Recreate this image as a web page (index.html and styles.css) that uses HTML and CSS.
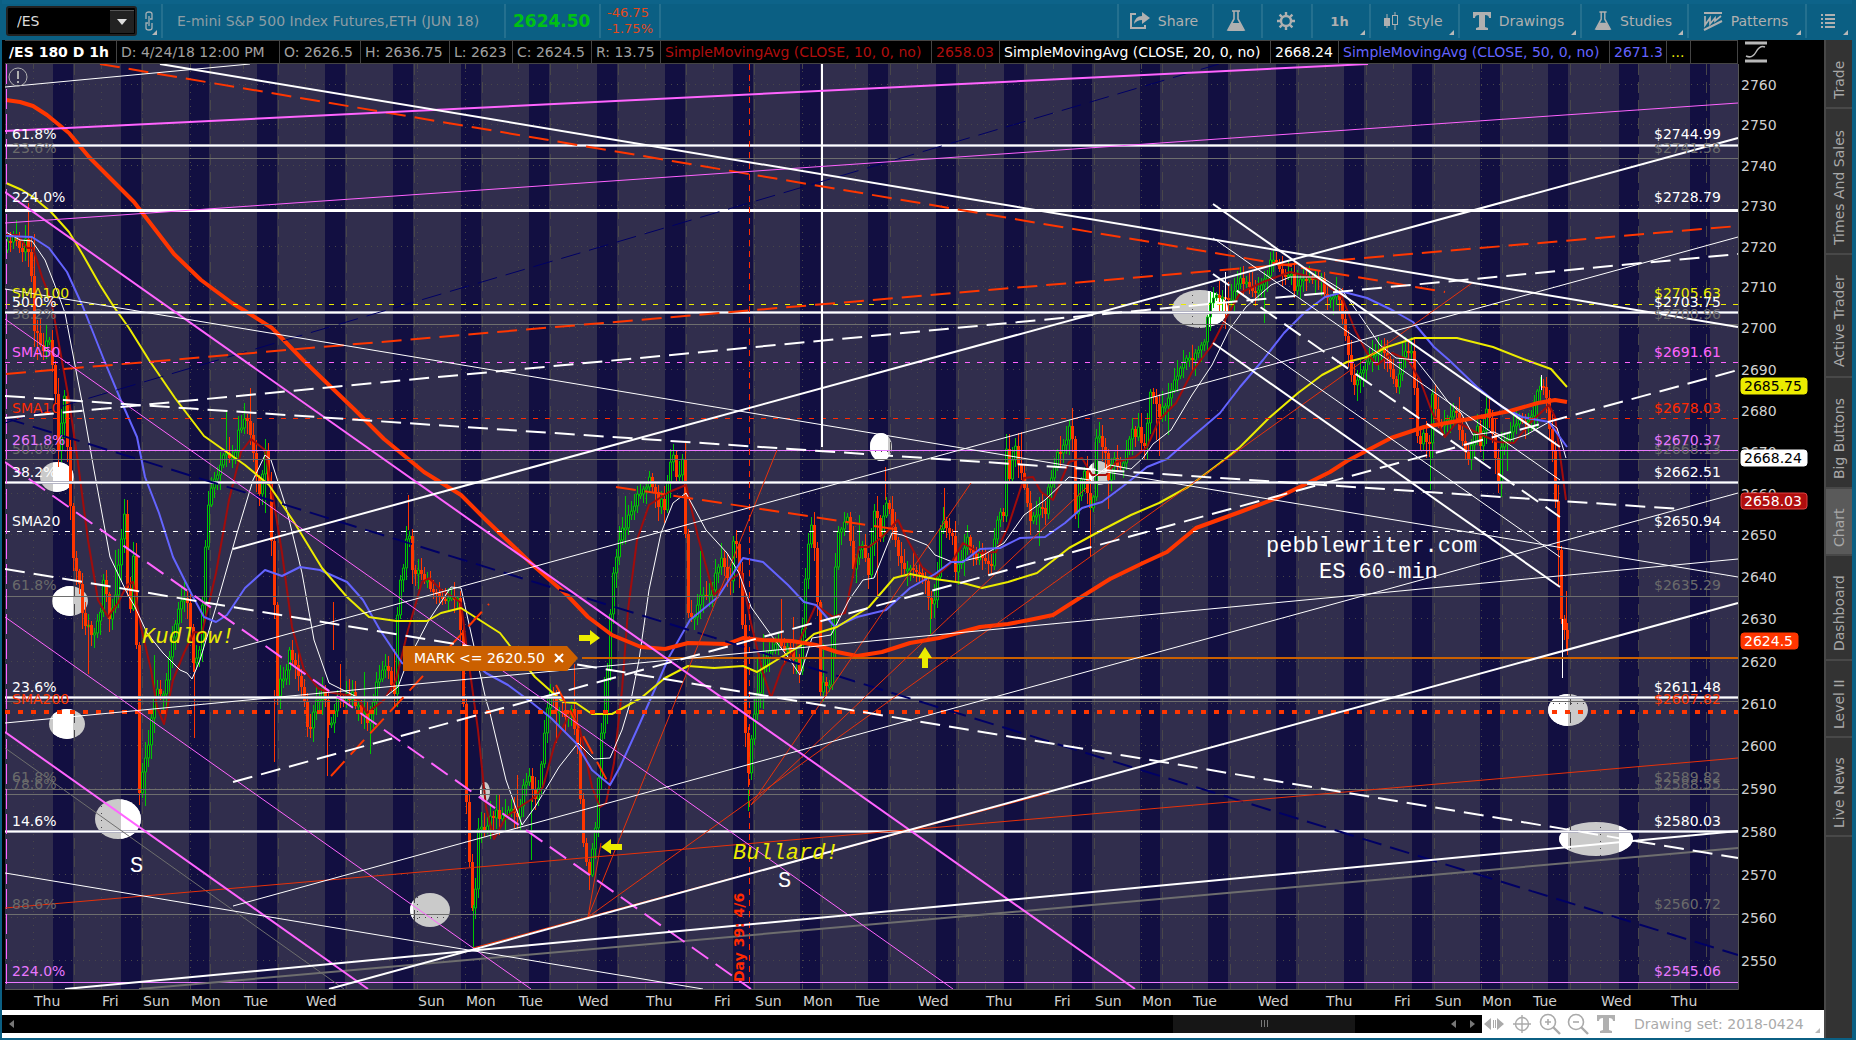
FILE: index.html
```html
<!DOCTYPE html>
<html lang="en">
<head>
  <meta charset="UTF-8">
  <meta name="viewport" content="width=device-width, initial-scale=1.0">
  <title>/ES Chart</title>
  <link rel="stylesheet" href="styles.css">
</head>
<body>
  <header class="toolbar">
    <div class="symbol-box">
      <input class="symbol" type="text" value="/ES" aria-label="Symbol">
      <button class="symbol-drop" aria-label="Choose symbol"><svg width="10" height="6"><path d="M0 0h10L5 6z" fill="#ddd"/></svg></button>
    </div>
    <button class="link corner" aria-label="Link">
      <svg width="12" height="20" fill="none" stroke="#a8b0b4" stroke-width="1.3"><path d="M3 8V3q0-2 3-2t3 2v5H7M9 12v5q0 2-3 2t-3-2v-5h2M6 5v10"/></svg>
    </button>
    <div class="name">E-mini S&amp;P 500 Index Futures,ETH (JUN 18)</div>
    <div class="last">2624.50</div>
    <div class="change"><span>-46.75</span><span>-1.75%</span></div>
    <div class="spacer"></div>
    <button class="tool share">
      <svg width="20" height="18"><path d="M6 2H1v14h14v-3" fill="none" stroke="#b0b0b0" stroke-width="2"/><path d="M12 0l8 6-8 6V8q-5 0-8 4 1-8 8-8z" fill="#b0b0b0"/></svg>
      Share
    </button>
    <button class="tool flask" aria-label="Analyze"><svg width="20" height="22"><use href="#flask-icon"/></svg></button>
    <button class="tool gear" aria-label="Settings">
      <svg width="20" height="20" fill="none" stroke="#b0b0b0"><circle cx="10" cy="10" r="5" stroke-width="2.4"/><path d="M10 1v4M10 15v4M1 10h4M15 10h4M3.6 3.6l3 3M13.4 13.4l3 3M16.4 3.6l-3 3M6.6 13.4l-3 3" stroke-width="2.4"/></svg>
    </button>
    <button class="tool period corner"><b>1h</b></button>
    <button class="tool style corner">
      <svg width="16" height="18" stroke="#b0b0b0"><path d="M4 2v14M12 0v18"/><rect x="1.500" y="6.500" width="5" height="7" fill="#b0b0b0"/><rect x="9.500" y="3.500" width="5" height="9" fill="#0b5f83"/></svg>
      Style
    </button>
    <button class="tool drawings corner"><svg width="18" height="18"><use href="#t-icon"/></svg>Drawings</button>
    <button class="tool studies corner"><svg width="18" height="22"><use href="#flask-icon"/></svg>Studies</button>
    <button class="tool patterns corner">
      <svg width="20" height="20" fill="none" stroke="#b0b0b0" stroke-width="2"><path d="M1 2h18M1 19l18-9"/><path d="M2 5v9l5-7v6l5-6v3l6-5" stroke-width="1.700"/></svg>
      Patterns
    </button>
    <button class="tool list corner" aria-label="Menu">
      <svg width="14" height="14" stroke="#b0b0b0" stroke-width="2"><path d="M0 1h2M4 1h10M0 5h2M4 5h10M0 9h2M4 9h10M0 13h2M4 13h10"/></svg>
    </button>
  </header>

  <main class="main">
    <section class="workspace">
      <div class="legend">
        <div class="cells">
          <span class="cell title">/ES 180 D 1h</span>
          <span class="cell date">D: 4/24/18 12:00 PM</span>
          <span class="cell open">O: 2626.5</span>
          <span class="cell high">H: 2636.75</span>
          <span class="cell low">L: 2623</span>
          <span class="cell close">C: 2624.5</span>
          <span class="cell range">R: 13.75</span>
          <span class="cell study sma10">SimpleMovingAvg (CLOSE, 10, 0, no)</span>
          <span class="cell value sma10">2658.03</span>
          <span class="cell study sma20">SimpleMovingAvg (CLOSE, 20, 0, no)</span>
          <span class="cell value sma20">2668.24</span>
          <span class="cell study sma50">SimpleMovingAvg (CLOSE, 50, 0, no)</span>
          <span class="cell sma50">2671.3</span>
          <span class="cell more">...</span>
        </div>
        <button class="scale" aria-label="Axis scale">
          <svg width="22" height="22" fill="none" stroke="#b8b8b8"><path d="M0 2h22M0 20h22" stroke-width="3"/><path d="M1 15q6 3 10-4t9-5" stroke-width="1.500"/></svg>
        </button>
      </div>
      <svg id="chart" class="chart" viewBox="5 64 1819 946"></svg>
      <footer class="bottom">
        <div class="scroll">
          <button class="arrow first" aria-label="Scroll to start"><svg width="5" height="8"><path d="M5 0v8L0 4z" fill="#777"/></svg></button>
          <div class="track"><div class="thumb"><i></i><i></i><i></i></div></div>
          <button class="arrow" aria-label="Scroll left"><svg width="5" height="8"><path d="M5 0v8L0 4z" fill="#777"/></svg></button>
          <button class="arrow" aria-label="Scroll right"><svg width="5" height="8"><path d="M0 0v8l5-4z" fill="#777"/></svg></button>
        </div>
        <button class="mini" aria-label="Pan"><svg width="20" height="12" fill="#aaa"><path d="M7 0v12L0 6zM13 0v12l7-6zM9 2h1v8H9zM11 2h1v8h-1z"/></svg></button>
        <button class="mini" aria-label="Crosshair"><svg width="18" height="18" fill="none" stroke="#aaa" stroke-width="1.400"><circle cx="9" cy="9" r="6.500"/><path d="M9 0v18M0 9h18"/></svg></button>
        <button class="mini" aria-label="Zoom in"><svg width="22" height="22" fill="none" stroke="#aaa" stroke-width="1.600"><circle cx="9" cy="9" r="7.500"/><path d="M9 6v6M6 9h6"/><path d="M14 14l7 7" stroke-width="2.400"/></svg></button>
        <button class="mini" aria-label="Zoom out"><svg width="22" height="22" fill="none" stroke="#aaa" stroke-width="1.600"><circle cx="9" cy="9" r="7.500"/><path d="M6 9h6"/><path d="M14 14l7 7" stroke-width="2.400"/></svg></button>
        <button class="mini" aria-label="Text"><svg width="18" height="18"><use href="#t-icon"/></svg></button>
        <button class="set corner">Drawing set: 2018-0424</button>
      </footer>
    </section>
    <nav class="tabs">
      <button class="tab trade">Trade</button>
      <button class="tab sales">Times And Sales</button>
      <button class="tab trader">Active Trader</button>
      <button class="tab big">Big Buttons</button>
      <button class="tab current">Chart</button>
      <button class="tab dash">Dashboard</button>
      <button class="tab level">Level II</button>
      <button class="tab news">Live News</button>
    </nav>
  </main>

  <svg class="defs" width="0" height="0">
    <symbol id="flask-icon" viewBox="0 0 20 22"><path d="M6 1h8M8 1v8L2 20h16L12 9V1" fill="none" stroke="#b0b0b0" stroke-width="1.600"/><path d="M6 13h8l4 8H2z" fill="#b0b0b0"/></symbol>
    <symbol id="t-icon" viewBox="0 0 18 18"><path d="M0 0h18v6h-2q0-3-4-3v12l3 1v2H3v-2l3-1V3Q2 3 2 6H0z" fill="#b0b0b0"/></symbol>
  </svg>
  <script src="chart.js"></script>
</body>
</html>
```

FILE: styles.css
```css
* {
  box-sizing: border-box;
}
body {
  margin: 0;
  height: 100vh;
  padding: 0 4px 2px 2px;
  display: flex;
  flex-direction: column;
  overflow: hidden;
  background: #0b5f83;
  font-family: "DejaVu Sans", sans-serif;
  font-size: 14px;
  color: #b0b0b0;
}
button,
input {
  font: inherit;
  color: inherit;
  border: 0;
  padding: 0;
  margin: 0;
  background: none;
}
.defs {
  position: absolute;
}

/* Toolbar */
.toolbar {
  flex: none;
  height: 40px;
  padding: 4px 0 2px 4px;
  display: flex;
  box-shadow: inset 0 4px #0d6389;
}
.symbol-box {
  width: 131px;
  height: 30px;
  margin-top: 2px;
  display: flex;
  align-items: center;
  background: #000;
  border: 2px solid #222;
  border-radius: 3px;
}
.symbol {
  flex: 1;
  width: 0;
  padding-left: 9px;
  color: #ddd;
}
.symbol-drop {
  width: 24px;
  height: 23px;
  margin-right: 1px;
  display: flex;
  align-items: center;
  justify-content: center;
  background: #222;
  border-top: 1px solid #555;
}
.link {
  position: relative;
  width: 24px;
  display: flex;
  align-items: center;
  justify-content: center;
}
.name,
.last,
.change {
  display: flex;
  align-items: center;
  border-left: 2px solid #24708f;
  white-space: nowrap;
}
.name {
  width: 343px;
  padding-left: 14px;
  color: #8d9da5;
}
.last {
  width: 95px;
  padding-left: 7px;
  font-size: 17px;
  font-weight: bold;
  color: #00c114;
}
.change {
  width: 62px;
  flex-direction: column;
  align-items: flex-start;
  padding: 1px 0 0 6px;
  font-size: 13px;
  line-height: 16px;
  color: #e14a1c;
  border-right: 2px solid #24708f;
}
.spacer {
  flex: 1;
}
.tool {
  position: relative;
  display: flex;
  align-items: center;
  justify-content: center;
  gap: 8px;
  padding-right: 3px;
  border-left: 2px solid #24708f;
  white-space: nowrap;
}
.share { width: 95px; }
.flask { width: 49px; }
.gear { width: 50px; }
.period { width: 58px; font-size: 13px; }
.style { width: 89px; }
.drawings { width: 122px; }
.studies { width: 107px; }
.patterns { width: 118px; }
.list { width: 47px; }
.corner::after {
  content: "";
  position: absolute;
  right: 4px;
  bottom: 3px;
  border-left: 5px solid transparent;
  border-bottom: 5px solid #b8b8b8;
}

/* Chart area */
.main {
  flex: 1;
  min-height: 0;
  display: flex;
}
.workspace {
  flex: 1;
  min-width: 0;
  display: flex;
  flex-direction: column;
  background: #000;
}
.legend {
  flex: none;
  height: 24px;
  margin-left: 3px;
  display: flex;
}
.cells {
  flex: 1;
  min-width: 0;
  display: flex;
  border: 1px solid #444;
  border-left: 0;
  overflow: hidden;
}
.cell {
  flex: none;
  padding: 0 3px 0 4px;
  line-height: 22px;
  border-right: 1px solid #444;
  white-space: nowrap;
  color: #a0a0a0;
}
.cell.title {
  width: 112px;
  font-weight: bold;
  color: #fff;
}
.date { width: 163px; }
.open { width: 81px; }
.high { width: 89px; }
.low { width: 63px; }
.close { width: 79px; }
.range { width: 69px; }
.study { width: 271px; }
.value { width: 68px; }
.cell.sma10 { color: #b00e0e; }
.cell.sma20 { color: #fff; }
.cell.sma50 { color: #6464ff; }
.cell.more { color: #ecec00; padding-right: 6px; }
.scale {
  width: 86px;
  padding-left: 7px;
  display: flex;
  align-items: center;
}
.chart {
  flex: 1;
  min-height: 0;
  margin-left: 3px;
  display: block;
}
.chart text {
  white-space: pre;
}
.note {
  font-family: "Liberation Mono", monospace;
  font-size: 22px;
}
.oblique {
  font-style: italic;
}
.strong {
  font-weight: bold;
}

/* Bottom strip */
.bottom {
  flex: none;
  height: 28px;
  display: flex;
  align-items: center;
  background: #fff;
}
.scroll {
  flex: 1;
  height: 18px;
  margin-bottom: 1px;
  display: flex;
  background: #000;
}
.arrow {
  width: 19px;
  display: flex;
  align-items: center;
  justify-content: center;
}
.track {
  flex: 1;
  display: flex;
}
.thumb {
  width: 182px;
  margin-left: auto;
  margin-right: 89px;
  display: flex;
  align-items: center;
  justify-content: center;
  gap: 2px;
  background: #161616;
}
.thumb i {
  width: 1px;
  height: 7px;
  background: #777;
}
.mini {
  width: 28px;
  height: 24px;
  padding-right: 4px;
  display: flex;
  align-items: center;
  justify-content: center;
}
.set {
  position: relative;
  width: 202px;
  height: 24px;
  padding-left: 12px;
  text-align: left;
  color: #aaa;
}

/* Side tabs */
.tabs {
  width: 28px;
  padding-top: 1px;
  display: flex;
  flex-direction: column;
  background: #333;
  border-left: 2px solid #484848;
}
.tab {
  flex: none;
  writing-mode: vertical-rl;
  transform: rotate(180deg);
  display: flex;
  align-items: center;
  justify-content: center;
  padding-bottom: 12px;
  border-top: 2px solid #484848;
  color: #a8a8a8;
}
.trade { height: 68px; }
.sales { height: 146px; }
.trader { height: 123px; }
.big { height: 111px; }
.current { height: 67px; background: #5a5a5a; }
.dash { height: 105px; }
.level { height: 77px; }
.news { height: 99px; }
```

FILE: chart.js
```js
const NS = "http://www.w3.org/2000/svg";
const chart = document.querySelector("#chart");

const WHITE = "#fff", RED = "#ff3600", PINK = "#ff64ff", VIOLET = "#e878ff";
const YELLOW = "#ecec00", GRAY = "#6e6e6e", NAVY = "#000064", BLUE = "#6464ff";
const LEFT = 5, RIGHT = 1738, TOP = 64, BOTTOM = 989;

const add = (name, attrs, parent = chart) => {
  const el = document.createElementNS(NS, name);
  for (const key in attrs) el.setAttribute(key, attrs[key]);
  parent.appendChild(el);
  return el;
};

const text = (x, y, str, fill, extra = {}) => {
  const el = add("text", { x, y, fill, ...extra });
  el.textContent = str;
  return el;
};

// log price scale
const priceY = p => Math.round(84 + 11075 * Math.log(2760 / p)) + 0.5;

// Background, night sessions
add("rect", { x: LEFT, y: TOP, width: RIGHT - LEFT, height: BOTTOM - TOP, fill: "#312e4d" });
const bands = [];
for (let i = 0; i < 23; i++) bands.push(Math.round(53 + i * 67.95));
bands.push(1619, 1690);
const bandClip = add("clipPath", { id: "bands" }, add("defs", {}));
bands.forEach(x => {
  const box = { x, y: TOP, width: 20, height: BOTTOM - TOP };
  add("rect", { ...box, fill: "#120f41" });
  add("rect", box, bandClip);
});

// Spots
const spots = [
  [57, 477, 17, 15], [70, 601, 18, 15], [67, 724, 18, 15], [118, 819, 23, 20],
  [430, 910, 20, 17], [485, 792, 5, 10], [881, 447, 11, 14], [1099, 473, 11, 12],
  [1200, 309, 28, 19], [1568, 710, 20, 16], [1596, 839, 37, 17]
];
spots.forEach(([cx, cy, rx, ry]) => {
  add("ellipse", { cx, cy, rx, ry, fill: "#cacaca" });
  add("ellipse", { cx, cy, rx, ry, fill: WHITE, "clip-path": "url(#bands)" });
});

// Grid
const days = [
  [33, "Thu"], [101, "Fri"], [142, "Sun"], [190, "Mon"], [243, "Tue"], [305, "Wed"],
  [417, "Sun"], [465, "Mon"], [518, "Tue"], [577, "Wed"], [645, "Thu"], [713, "Fri"],
  [754, "Sun"], [802, "Mon"], [855, "Tue"], [917, "Wed"], [985, "Thu"], [1053, "Fri"],
  [1094, "Sun"], [1141, "Mon"], [1192, "Tue"], [1257, "Wed"], [1325, "Thu"], [1393, "Fri"],
  [1434, "Sun"], [1481, "Mon"], [1532, "Tue"], [1600, "Wed"], [1670, "Thu"]
];
const grid = add("g", { stroke: "#48464a", fill: "none" });
for (let p = 2550; p <= 2760; p += 10) {
  add("path", { d: `M${LEFT} ${priceY(p)}H${RIGHT}`, "stroke-dasharray": "1 5" }, grid);
}
days.forEach(([x]) => {
  add("path", { d: `M${x}.5 ${TOP}V${BOTTOM}`, "stroke-dasharray": "1 6" }, grid);
  add("path", { d: `M${x}.5 ${TOP}v5M${x}.5 984v5` }, grid);
});
for (let x = 74; x < RIGHT; x += 68) {
  add("path", { d: `M${x}.5 ${TOP}V${BOTTOM}`, "stroke-dasharray": "11 7" }, grid);
}

// Candles
const closes = [
  6,250, 12,240, 16,236, 20,250, 26,245, 30,255, 34,327, 42,345, 49,340, 55,400, 59,460, 63,385,
  69,470, 71,547, 78,585, 84,620, 92,637, 98,625, 104,567, 110,630, 118,567, 124,520, 129,632,
  134,540, 137,690, 139,790, 147,747, 153,700, 163,690, 171,647, 180,607, 188,600, 193,665,
  200,640, 206,523, 210,493, 220,463, 233,453, 245,413, 251,447, 259,493, 265,450, 269,500,
  274,607, 277,693, 290,650, 302,690, 308,730, 322,685, 329,727, 339,693, 355,700, 367,723,
  376,687, 386,663, 394,687, 398,600, 408,530, 412,573, 427,577, 437,600, 449,593, 459,607,
  463,700, 467,830, 473,920, 478,833, 490,817, 506,813, 518,810, 527,773, 535,803, 543,747,
  549,693, 563,717, 571,713, 578,760, 582,837, 588,880, 594,840, 600,740, 606,690, 612,583,
  620,537, 633,500, 649,483, 657,500, 665,507, 671,447, 678,483, 682,463, 688,610, 696,617,
  700,597, 712,587, 722,560, 729,593, 734,527, 741,593, 744,700, 747,790, 753,723, 757,687,
  771,650, 784,647, 792,650, 799,673, 806,560, 812,522, 816,567, 820,690, 831,680, 833,583,
  837,540, 848,520, 853,563, 861,537, 869,577, 873,503, 880,540, 885,497, 892,523, 900,570,
  914,567, 924,573, 930,607, 936,600, 939,540, 943,520, 951,533, 955,567, 967,540, 976,553,
  991,570, 996,513, 1004,517, 1006,453, 1010,480, 1014,450, 1020,463, 1029,517, 1045,507,
  1053,463, 1065,443, 1071,417, 1075,513, 1084,473, 1090,510, 1094,497, 1095,433, 1104,447,
  1108,473, 1114,453, 1120,473, 1131,437, 1139,423, 1143,453, 1151,387, 1159,417, 1171,390,
  1184,357, 1192,357, 1204,343, 1208,310, 1214,293, 1223,300, 1231,300, 1238,280, 1256,290,
  1267,273, 1271,253, 1279,267, 1286,283, 1290,267, 1294,293, 1300,277, 1321,280, 1326,300,
  1338,293, 1344,333, 1349,360, 1353,387, 1359,373, 1371,357, 1383,347, 1396,387, 1404,347,
  1412,353, 1418,453, 1424,430, 1428,460, 1432,397, 1440,430, 1455,410, 1467,463, 1477,423,
  1481,453, 1485,403, 1494,440, 1497,500, 1500,450, 1518,420, 1530,423, 1536,390, 1542,380,
  1547,407, 1553,463, 1558,553, 1561,617, 1566,640
];
const closeAt = x => {
  for (let i = 2; i < closes.length; i += 2) {
    if (x <= closes[i]) {
      const k = (x - closes[i - 2]) / (closes[i] - closes[i - 2]);
      return closes[i - 1] + k * (closes[i + 1] - closes[i - 1]);
    }
  }
  return closes[closes.length - 1];
};
let seed = 11;
const rand = () => (seed = (seed * 16807) % 2147483647) / 2147483647;
let up = "", upWick = "", down = "", downWick = "";
let open = 250;
for (let x = 7; x < 1568; x += 3) {
  const calm = x > 1150 ? 7 : 14;
  const close = Math.round(closeAt(x) + (rand() - 0.5) * calm);
  const top = Math.min(open, close), end = Math.max(open, close, top + 2);
  const long = rand() > 0.93 ? 30 : 0;
  const high = Math.round(top - 2 - rand() * 14 - (x < 900 ? long : 0));
  const low = Math.round(end + 2 + rand() * 14 + (rand() > 0.95 ? 25 : 0));
  if (close <= open) {
    up += `M${x - 0.5} ${top}h2v${end - top}h-2z`;
    upWick += `M${x + 0.5} ${high}V${top}M${x + 0.5} ${end}V${low}`;
  } else {
    down += `M${x - 1} ${top}h3v${end - top}h-3z`;
    downWick += `M${x + 0.5} ${high}V${low}`;
  }
  open = close;
}
add("path", { d: upWick, stroke: "#00c800" });
add("path", { d: up, stroke: "#00c800", fill: "#120f41" });
add("path", { d: downWick, stroke: RED });
add("path", { d: down, fill: RED });
// longest wicks
add("path", { d: "M16.500 220V240M473.500 905V951M88.500 640V674M194.500 660V711M531.500 800V860M748.500 790V811M930.500 600V634M1090.500 500V530M1430.500 450V490", stroke: "#00c800" });
add("path", { d: "M88.500 620V674M194.500 660V738M274.500 690V762M327.500 700V776M408.500 495V530M333.500 602V650M885.500 467V500M877.500 540V596M944.500 488V520M1021.500 432V460M1072.500 408V430M1090.500 510V557M1566.500 591V650", stroke: RED });
add("path", { d: "M1562.500 619V678M1225.500 272V300M1541.500 375V390", stroke: WHITE });

// Moving averages
const averages = [
  ["#a00c0c", 2, "6,235 18,235 27,248 33,248 42,277 51,300 56,327 60,350 69,400 78,463 88,540 98,600 108,617 118,603 127,585 133,582 141,627 151,670 157,707 164,724 173,680 184,653 194,632 202,633 216,573 229,500 241,452 251,439 265,450 273,497 282,553 292,627 304,670 318,688 327,692 347,695 359,700 367,713 384,700 396,680 408,630 422,582 429,578 441,590 453,597 461,603 467,650 478,730 486,807 494,839 506,817 518,808 535,797 543,787 555,743 571,711 580,730 592,787 600,807 606,803 614,763 622,690 628,610 637,540 649,505 669,492 686,485 698,537 714,595 727,583 741,572 751,623 763,673 771,698 782,667 796,648 816,605 833,617 845,613 859,547 869,547 882,537 898,520 906,537 922,567 935,577 951,563 963,543 980,553 996,552 1008,527 1024,478 1033,477 1041,492 1053,500 1069,462 1082,458 1092,475 1106,475 1116,462 1135,457 1147,447 1159,420 1176,403 1192,372 1212,345 1225,320 1240,293 1263,282 1290,272 1303,275 1321,280 1342,297 1355,330 1367,353 1377,365 1392,353 1408,360 1420,380 1432,412 1445,437 1457,422 1477,433 1498,442 1514,443 1530,423 1549,405 1555,417 1566,500"],
  [WHITE, 1, "6,232 20,240 32,241 45,260 54,283 65,313 74,360 82,402 94,470 110,557 127,593 135,607 147,633 163,653 180,670 187,673 192,679 200,660 216,607 237,533 253,480 265,455 271,460 286,507 302,573 314,640 329,683 347,692 359,698 384,698 398,687 408,660 429,620 451,587 461,588 471,633 486,700 490,713 506,780 522,825 535,807 559,767 578,743 594,759 610,758 622,730 631,700 639,660 649,590 661,533 673,503 686,493 706,530 727,553 739,573 751,607 771,635 788,657 800,675 812,638 831,635 849,600 863,580 874,578 892,533 902,535 927,545 935,555 955,563 980,557 1004,543 1024,515 1045,500 1069,477 1090,480 1110,465 1131,469 1143,458 1153,444 1171,430 1192,395 1212,365 1229,330 1246,307 1271,285 1290,277 1321,277 1342,290 1363,320 1380,345 1396,358 1416,360 1432,380 1449,403 1461,413 1473,435 1494,432 1510,440 1526,435 1549,422 1557,428 1566,458"],
  [BLUE, 2, "6,236 32,237 49,248 67,272 83,307 104,360 122,403 137,437 145,477 159,513 173,557 192,595 204,617 216,622 227,615 245,588 265,570 282,576 300,567 320,570 347,582 363,600 380,630 402,663 420,670 440,658 465,655 486,673 508,685 531,702 551,718 576,743 592,770 610,785 620,767 640,723 651,698 669,657 690,620 718,597 743,558 763,562 788,585 804,602 816,605 835,627 857,617 886,610 910,588 935,574 951,562 963,562 980,549 1000,548 1020,538 1045,537 1065,523 1082,508 1102,502 1122,487 1147,467 1167,459 1192,437 1220,413 1240,387 1263,360 1284,333 1305,312 1325,297 1344,292 1367,298 1392,310 1413,322 1434,347 1449,360 1477,387 1502,407 1522,417 1549,422 1567,447"],
  [YELLOW, 2, "6,183 22,190 33,197 51,212 69,232 83,255 100,285 114,307 129,328 149,360 175,398 204,436 245,465 269,485 294,522 322,568 347,597 369,617 396,621 427,621 441,613 461,608 478,619 500,633 510,646 535,677 563,702 576,703 592,714 612,714 641,698 665,678 688,666 714,668 743,666 757,672 780,658 800,646 814,634 837,627 869,607 894,578 910,574 935,579 963,583 982,588 1008,582 1037,573 1069,548 1102,530 1131,515 1159,503 1188,487 1220,463 1240,447 1269,418 1298,393 1322,375 1347,362 1367,357 1387,347 1415,338 1457,338 1493,347 1526,360 1551,369 1567,387"],
  [RED, 4, "6,100 20,102 33,106 47,115 69,133 89,157 112,180 134,202 154,228 174,254 201,280 232,303 250,314 272,328 303,360 331,387 355,410 384,439 424,472 461,495 486,520 510,543 535,567 567,595 588,617 612,635 641,647 665,649 688,643 727,644 743,638 763,640 792,641 816,645 837,652 857,656 882,652 910,643 939,638 980,627 1008,624 1029,620 1053,615 1078,599 1110,579 1143,563 1167,552 1196,528 1240,512 1277,498 1310,482 1330,472 1347,461 1391,438 1424,427 1469,419 1510,411 1538,403 1555,400 1567,402"]
];
averages.forEach(([stroke, width, points]) => {
  add("polyline", { points, stroke, "stroke-width": width, fill: "none", "stroke-linejoin": "round" });
});

// Price levels: y, colour, width, dash
const levels = [
  [158.5, GRAY, 1], [324.5, GRAY, 1], [459.5, GRAY, 1], [596.5, GRAY, 1], [701.5, GRAY, 1],
  [789.5, GRAY, 1], [794.5, GRAY, 1], [914.5, GRAY, 1],
  [304.5, YELLOW, 1, "5 7"], [362.5, PINK, 1, "5 7"], [418.5, "#ff2a00", 1, "5 7"], [531.5, WHITE, 1, "5 7"],
  [450.5, VIOLET, 1], [982.5, VIOLET, 1],
  [145.5, "#b4b4c4", 3], [145.5, WHITE, 1], [210.5, WHITE, 3], [312.5, "#b4b4c4", 3], [312.5, WHITE, 1],
  [482.5, "#b4b4c4", 3], [482.5, WHITE, 1], [697.5, "#b4b4c4", 3], [697.5, WHITE, 1],
  [831.5, "#b4b4c4", 3], [831.5, WHITE, 1], [712, RED, 4, "5 8"]
];
const line = (x1, y1, x2, y2, stroke, width, dash) => {
  const attrs = { x1, y1, x2, y2, stroke, "stroke-width": width };
  if (dash) attrs["stroke-dasharray"] = dash;
  add("line", attrs);
};
levels.forEach(([y, color, width, dash]) => line(LEFT, y, RIGHT, y, color, width, dash));
line(582, 658, RIGHT, 658, "#cb6000", 2);
line(6.5, TOP, 6.5, BOTTOM, PINK, 1, "20 5");
line(749.5, TOP, 749.5, BOTTOM, "#ff2a00", 1, "6 5");
line(822, TOP, 822, 447, WHITE, 2);

// Trend lines
const D = "20 9";
const trends = [
  [5, 423, 1219, 64, NAVY, 1, D], [5, 418, 1738, 955, NAVY, 2, D],
  [139, 989, 1738, 848, GRAY, 2], [5, 748, 344, 989, GRAY, 1],
  [5, 908, 1738, 758, "#e8320a", 1], [473, 948, 1049, 793, RED, 1],
  [588, 917, 601, 843, "#e8320a", 1], [588, 917, 777, 450, "#e8320a", 1], [588, 917, 1472, 283, "#e8320a", 1],
  [751, 805, 971, 483, "#e8320a", 1], [751, 805, 1086, 488, "#e8320a", 1],
  [100, 64, 1445, 292, RED, 2, D], [6, 374, 1738, 226, RED, 2, D],
  [331, 776, 489, 604, RED, 2, D], [556, 685, 610, 786, RED, 2, D], [616, 487, 913, 532, RED, 2, D],
  [5, 131, 1368, 64, PINK, 2], [5, 223, 1738, 103, PINK, 1], [5, 192, 1135, 989, PINK, 2],
  [5, 319, 953, 989, PINK, 1], [5, 462, 751, 989, PINK, 2, D], [5, 617, 531, 989, PINK, 1], [5, 732, 368, 989, PINK, 2],
  [160, 64, 1738, 327, WHITE, 2], [5, 87, 250, 64, WHITE, 1],
  [5, 418, 1738, 254, WHITE, 2, D], [5, 396, 1680, 509, WHITE, 2, D], [5, 569, 1738, 858, WHITE, 2, D],
  [233, 549, 1738, 138, WHITE, 2], [233, 649, 1738, 237, WHITE, 1], [233, 906, 1738, 493, WHITE, 1],
  [233, 782, 1738, 370, WHITE, 2, D], [329, 989, 1738, 603, WHITE, 2], [65, 989, 1738, 831, WHITE, 2],
  [5, 723, 1738, 559, WHITE, 1], [5, 289, 1738, 577, WHITE, 1], [5, 873, 703, 989, WHITE, 1],
  [1213, 204, 1560, 447, WHITE, 2], [1213, 238, 1560, 480, WHITE, 1], [1213, 274, 1560, 517, WHITE, 2, D],
  [1213, 314, 1560, 557, WHITE, 1], [1213, 343, 1560, 587, WHITE, 2]
];
trends.forEach(t => line(...t));

// Level labels: baseline, percent, price, colour
const DIM = "#6a6a6a";
const labels = [
  [153, "23.6%", "$2741.58", DIM], [319, "38.2%", "$2700.96", DIM], [454, "50.0%", "$2668.13", DIM],
  [590, "61.8%", "$2635.29", DIM], [782, "61.8%", "$2589.82", DIM],
  [789, "78.6%", "$2588.55", DIM], [909, "88.6%", "$2560.72", DIM],
  [704, "SMA200", "$2607.82", RED], [298, "SMA100", "$2705.63", YELLOW], [357, "SMA50", "$2691.61", PINK],
  [413, "SMA10", "$2678.03", "#ff2a00"], [445, "261.8%", "$2670.37", VIOLET], [976, "224.0%", "$2545.06", VIOLET],
  [139, "61.8%", "$2744.99", WHITE], [202, "224.0%", "$2728.79", WHITE], [307, "50.0%", "$2703.75", WHITE],
  [477, "38.2%", "$2662.51", WHITE], [526, "SMA20", "$2650.94", WHITE], [692, "23.6%", "$2611.48", WHITE],
  [826, "14.6%", "$2580.03", WHITE]
];
labels.forEach(([y, percent, price, color]) => {
  text(12, y, percent, color);
  text(1654, y, price, color);
});

// Notes
text(142, 643, "Kudlow!", YELLOW, { class: "note oblique" });
text(733, 859, "Bullard!", YELLOW, { class: "note oblique" });
text(1266, 552, "pebblewriter.com", WHITE, { class: "note" });
text(1319, 578, "ES 60-min", WHITE, { class: "note" });
text(130, 872, "S", WHITE, { class: "note" });
text(778, 887, "S", WHITE, { class: "note" });
text(0, 0, "Day 39: 4/6", "#ff2a00", { transform: "translate(744 982) rotate(-90)", class: "strong" });

add("path", { d: "M579 635h11v-5l10 8-10 7v-4h-11zM925 647l7 11h-4v10h-6v-10h-4zM622 844h-11v-5l-10 8 10 7v-4h11z", fill: YELLOW });

add("path", { d: "M403 646H567L578 658 567 671H403z", fill: "#cb6000" });
text(414, 663, "MARK <= 2620.50", WHITE);
add("path", { d: "M555 654l8 8M563 654l-8 8", stroke: WHITE, "stroke-width": 2 });

add("circle", { cx: 18, cy: 77, r: 9, fill: "none", stroke: "#b0b0b0" });
add("path", { d: "M18 71v8M18 81v2", stroke: "#b0b0b0", "stroke-width": 2 });

// Axes
add("path", { d: `M${LEFT} 989.500H${RIGHT}.5V64`, fill: "none", stroke: "#555" });
for (let p = 2550; p <= 2760; p += 10) {
  text(1741, priceY(p) + 5, p, "#d0d0d0");
}
days.forEach(([x, name]) => text(x + 1, 1006, name, "#d0d0d0"));

// Price tags
const tags = [
  [386, "2685.75", YELLOW, "#000", 66], [458, "2668.24", WHITE, "#000", 66],
  [501, "2658.03", "#b00e0e", WHITE, 66], [641, "2624.5", RED, WHITE, 57]
];
tags.forEach(([y, value, fill, color, width]) => {
  add("rect", { x: 1741, y: y - 8, width, height: 16, rx: 3, fill, stroke: fill === "#b00e0e" ? "#e04040" : fill });
  text(1744, y + 5, value, color);
});
```
